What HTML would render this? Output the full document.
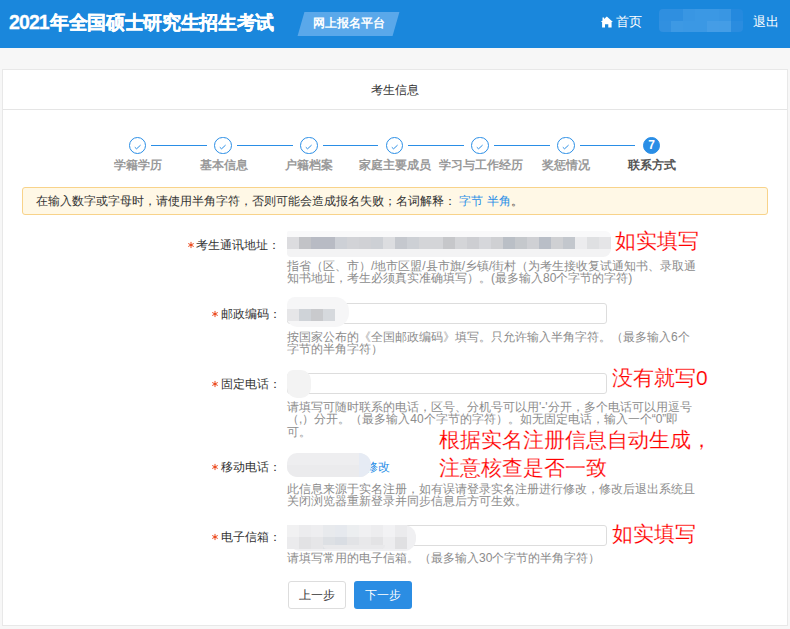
<!DOCTYPE html>
<html><head><meta charset="utf-8">
<style>
*{margin:0;padding:0;box-sizing:border-box}
html,body{width:790px;height:629px;overflow:hidden;background:#f7f7f7;font-family:"Liberation Sans",sans-serif;color:#333}
.a{position:absolute;white-space:nowrap}
#hd{position:absolute;left:0;top:0;width:790px;height:48px;background:#1a87dc}
#title{left:9px;top:11px;font-size:18.67px;line-height:22px;font-weight:bold;color:#fff;-webkit-text-stroke:0.3px #fff}
#plat{left:301px;top:12px;width:95px;height:24px;background:#5aa8ea;transform:skewX(-16deg)}
#platt{left:313px;top:17px;font-size:12px;line-height:12px;font-weight:bold;color:#fff}
#card{position:absolute;left:2px;top:69px;width:786px;height:557px;background:#fff;border:1px solid #e8e8e8}
#cardline{position:absolute;left:3px;top:109px;width:784px;height:1px;background:#e5e5e5}
.lbl{font-size:12px;line-height:12px;color:#333}
.help{font-size:12px;line-height:12.3px;color:#8c8c8c}
.ann{font-size:21px;line-height:21px;color:#ff0000;-webkit-text-stroke:0.18px #fff}
.inp{position:absolute;width:320px;height:21px;border:1px solid #ddd;border-radius:3px;background:#fff}
.star{color:#e8402f;font-size:15px;font-family:"Liberation Mono",monospace;font-weight:bold;position:relative;top:2px}
.circ{position:absolute;width:18px;height:18px;border:1px solid #2a8ee6;border-radius:50%;background:#fff}
.sline{position:absolute;height:1px;background:#2a8ee6;top:145px}
.slbl{font-size:12px;line-height:12px;font-weight:bold;color:#999}
.blur{position:absolute;border-radius:10px}
</style></head><body>
<div id="hd"></div>
<div class="a" id="title"><span style="font-size:19.5px;letter-spacing:-0.9px;margin-right:1.2px">2021</span><span style="letter-spacing:-0.33px">年全国硕士研究生招生考试</span></div>
<div class="a" id="plat"></div>
<div class="a" id="platt">网上报名平台</div>
<svg class="a" style="left:600px;top:16px" width="14" height="12" viewBox="0 0 14 12"><path d="M6.85 0.6 L12.9 5.9 L11.6 5.9 L11.6 11.5 L8.3 11.5 L8.3 8.3 L5.0 8.3 L5.0 11.5 L2.1 11.5 L2.1 5.9 L0.8 5.9 L2.5 4.4 L2.5 1.5 L4.1 1.5 L4.1 3.0 Z" fill="#fff"/></svg>
<div class="a" style="left:616px;top:15px;font-size:13px;line-height:13px;color:#fff">首页</div>
<div class="a" style="left:659px;top:9px;width:84px;height:23px;border-radius:4px;overflow:hidden"><div style="position:absolute;left:0px;top:0;width:12px;height:11.5px;background:#2f8fe0"></div><div style="position:absolute;left:12px;top:0;width:12px;height:11.5px;background:#2f8fe0"></div><div style="position:absolute;left:24px;top:0;width:12px;height:11.5px;background:#3996e3"></div><div style="position:absolute;left:36px;top:0;width:12px;height:11.5px;background:#3b98e4"></div><div style="position:absolute;left:48px;top:0;width:12px;height:11.5px;background:#3b98e4"></div><div style="position:absolute;left:60px;top:0;width:12px;height:11.5px;background:#3996e3"></div><div style="position:absolute;left:72px;top:0;width:12px;height:11.5px;background:#2489de"></div><div style="position:absolute;left:0px;top:11.5px;width:12px;height:11.5px;background:#3190e0"></div><div style="position:absolute;left:12px;top:11.5px;width:12px;height:11.5px;background:#3d99e4"></div><div style="position:absolute;left:24px;top:11.5px;width:12px;height:11.5px;background:#3b98e4"></div><div style="position:absolute;left:36px;top:11.5px;width:12px;height:11.5px;background:#3b98e4"></div><div style="position:absolute;left:48px;top:11.5px;width:12px;height:11.5px;background:#459de6"></div><div style="position:absolute;left:60px;top:11.5px;width:12px;height:11.5px;background:#449de6"></div><div style="position:absolute;left:72px;top:11.5px;width:12px;height:11.5px;background:#2a8cdf"></div></div>
<div class="a" style="left:753px;top:15px;font-size:13px;line-height:13px;color:#fff">退出</div>

<div id="card"></div>
<div id="cardline"></div>
<div class="a lbl" style="left:371px;top:84px">考生信息</div>
<!-- steps -->
<div class="circ" style="left:128.50px;top:136.50px;width:17.6px;height:17.6px"><svg width="16" height="16" style="position:absolute;left:0;top:0"><path d="M4.8 9.3 L6.6 10.8 L10.6 7.1" stroke="#2a8ee6" stroke-width="1" fill="none"/></svg></div>
<div class="a slbl" style="left:77.80px;width:120px;text-align:center;top:159px;color:#999">学籍学历</div>
<div class="circ" style="left:214.23px;top:136.50px;width:17.6px;height:17.6px"><svg width="16" height="16" style="position:absolute;left:0;top:0"><path d="M4.8 9.3 L6.6 10.8 L10.6 7.1" stroke="#2a8ee6" stroke-width="1" fill="none"/></svg></div>
<div class="sline" style="left:151.10px;width:55.73px"></div>
<div class="a slbl" style="left:163.53px;width:120px;text-align:center;top:159px;color:#999">基本信息</div>
<div class="circ" style="left:299.96px;top:136.50px;width:17.6px;height:17.6px"><svg width="16" height="16" style="position:absolute;left:0;top:0"><path d="M4.8 9.3 L6.6 10.8 L10.6 7.1" stroke="#2a8ee6" stroke-width="1" fill="none"/></svg></div>
<div class="sline" style="left:236.83px;width:55.73px"></div>
<div class="a slbl" style="left:249.26px;width:120px;text-align:center;top:159px;color:#999">户籍档案</div>
<div class="circ" style="left:385.69px;top:136.50px;width:17.6px;height:17.6px"><svg width="16" height="16" style="position:absolute;left:0;top:0"><path d="M4.8 9.3 L6.6 10.8 L10.6 7.1" stroke="#2a8ee6" stroke-width="1" fill="none"/></svg></div>
<div class="sline" style="left:322.56px;width:55.73px"></div>
<div class="a slbl" style="left:334.99px;width:120px;text-align:center;top:159px;color:#999">家庭主要成员</div>
<div class="circ" style="left:471.42px;top:136.50px;width:17.6px;height:17.6px"><svg width="16" height="16" style="position:absolute;left:0;top:0"><path d="M4.8 9.3 L6.6 10.8 L10.6 7.1" stroke="#2a8ee6" stroke-width="1" fill="none"/></svg></div>
<div class="sline" style="left:408.29px;width:55.73px"></div>
<div class="a slbl" style="left:420.72px;width:120px;text-align:center;top:159px;color:#999">学习与工作经历</div>
<div class="circ" style="left:557.15px;top:136.50px;width:17.6px;height:17.6px"><svg width="16" height="16" style="position:absolute;left:0;top:0"><path d="M4.8 9.3 L6.6 10.8 L10.6 7.1" stroke="#2a8ee6" stroke-width="1" fill="none"/></svg></div>
<div class="sline" style="left:494.02px;width:55.73px"></div>
<div class="a slbl" style="left:506.45px;width:120px;text-align:center;top:159px;color:#999">奖惩情况</div>
<div class="circ" style="left:642.88px;top:136.50px;width:17.6px;height:17.6px;background:#2a8ee6;color:#fff;font-size:12px;font-weight:bold;line-height:15.6px;text-align:center">7</div>
<div class="sline" style="left:579.75px;width:55.73px"></div>
<div class="a slbl" style="left:592.18px;width:120px;text-align:center;top:159px;color:#555">联系方式</div>
<!-- alert -->
<div class="a" style="left:22px;top:187px;width:746px;height:28px;background:#fff8e6;border:1px solid #f8d38a;border-radius:3px"></div>
<div class="a lbl" style="left:36px;top:195px">在输入数字或字母时，请使用半角字符，否则可能会造成报名失败；名词解释： <span style="color:#2a8ee6">字节 半角</span>。</div>

<!-- row 1 -->
<svg class="a" style="left:186.5px;top:241px" width="8" height="8" viewBox="0 0 8 8"><g stroke="#ec4a1e" stroke-width="1" stroke-linecap="round"><path d="M4 1.3V6.7M1.6 2.7L6.4 5.3M1.6 5.3L6.4 2.7"/></g><circle cx="4" cy="4" r="1.1" fill="#ec4a1e"/></svg>
<div class="a lbl" style="left:196px;top:239px">考生通讯地址：</div>
<div class="inp" style="left:287px;top:232px"></div>
<div class="a" style="left:287px;top:231px;width:324px;height:6px;background:#f9f9fa;border-radius:2px 8px 0 0"></div><div class="a" style="left:287px;top:249px;width:324px;height:8px;background:#f3f3f4;border-radius:0 0 8px 4px"></div>
<div class="a" style="left:287px;top:237px;width:12px;height:12px;background:#dcdcdf"></div><div class="a" style="left:299px;top:237px;width:12px;height:12px;background:#c2c3c7"></div><div class="a" style="left:311px;top:237px;width:12px;height:12px;background:#b8bbc4"></div><div class="a" style="left:323px;top:237px;width:12px;height:12px;background:#b8bbc4"></div><div class="a" style="left:335px;top:237px;width:12px;height:12px;background:#cdd0d6"></div><div class="a" style="left:347px;top:237px;width:12px;height:12px;background:#d2d3d7"></div><div class="a" style="left:359px;top:237px;width:12px;height:12px;background:#d0d1d5"></div><div class="a" style="left:371px;top:237px;width:12px;height:12px;background:#cdd0d5"></div><div class="a" style="left:383px;top:237px;width:12px;height:12px;background:#dcdde0"></div><div class="a" style="left:395px;top:237px;width:12px;height:12px;background:#c5c8ce"></div><div class="a" style="left:407px;top:237px;width:12px;height:12px;background:#cdd0d5"></div><div class="a" style="left:419px;top:237px;width:12px;height:12px;background:#d4d5d8"></div><div class="a" style="left:431px;top:237px;width:12px;height:12px;background:#d4d5d8"></div><div class="a" style="left:443px;top:237px;width:12px;height:12px;background:#c6c7ca"></div><div class="a" style="left:455px;top:237px;width:12px;height:12px;background:#d4d5d8"></div><div class="a" style="left:467px;top:237px;width:12px;height:12px;background:#cdced2"></div><div class="a" style="left:479px;top:237px;width:12px;height:12px;background:#d6d7db"></div><div class="a" style="left:491px;top:237px;width:12px;height:12px;background:#cfd0d3"></div><div class="a" style="left:503px;top:237px;width:12px;height:12px;background:#babfc6"></div><div class="a" style="left:515px;top:237px;width:12px;height:12px;background:#c5c8cc"></div><div class="a" style="left:527px;top:237px;width:12px;height:12px;background:#cfd0d4"></div><div class="a" style="left:539px;top:237px;width:12px;height:12px;background:#b9bec7"></div><div class="a" style="left:551px;top:237px;width:12px;height:12px;background:#cfd0d3"></div><div class="a" style="left:563px;top:237px;width:12px;height:12px;background:#c3c7cd"></div><div class="a" style="left:575px;top:237px;width:12px;height:12px;background:#ececee"></div><div class="a" style="left:587px;top:237px;width:12px;height:12px;background:#dfe0e2"></div><div class="a" style="left:599px;top:237px;width:12px;height:12px;background:#e5e5e7"></div>
<div class="a help" style="left:287px;top:260px">指省（区、市）/地市区盟/县市旗/乡镇/街村（为考生接收复试通知书、录取通<br>知书地址，考生必须真实准确填写）。(最多输入80个字节的字符)</div>
<div class="a ann" style="left:615px;top:230px">如实填写</div>
<!-- row 2 -->
<svg class="a" style="left:210.5px;top:310px" width="8" height="8" viewBox="0 0 8 8"><g stroke="#ec4a1e" stroke-width="1" stroke-linecap="round"><path d="M4 1.3V6.7M1.6 2.7L6.4 5.3M1.6 5.3L6.4 2.7"/></g><circle cx="4" cy="4" r="1.1" fill="#ec4a1e"/></svg>
<div class="a lbl" style="left:220.5px;top:308px">邮政编码：</div>
<div class="inp" style="left:287px;top:303px"></div>
<div class="a" style="left:287px;top:297px;width:62px;height:30px;background:#f6f6f7;border-radius:8px 14px 14px 10px"></div>
<div class="a" style="left:287px;top:309px;width:12px;height:12px;background:#e6e6e8"></div><div class="a" style="left:299px;top:309px;width:12px;height:12px;background:#cfd3d8"></div><div class="a" style="left:311px;top:309px;width:12px;height:12px;background:#c9cacd"></div><div class="a" style="left:323px;top:309px;width:12px;height:12px;background:#d6d9dd"></div>
<div class="a help" style="left:287px;top:331px">按国家公布的《全国邮政编码》填写。只允许输入半角字符。（最多输入6个<br>字节的半角字符）</div>
<!-- row 3 -->
<svg class="a" style="left:210.5px;top:380px" width="8" height="8" viewBox="0 0 8 8"><g stroke="#ec4a1e" stroke-width="1" stroke-linecap="round"><path d="M4 1.3V6.7M1.6 2.7L6.4 5.3M1.6 5.3L6.4 2.7"/></g><circle cx="4" cy="4" r="1.1" fill="#ec4a1e"/></svg>
<div class="a lbl" style="left:220.5px;top:378px">固定电话：</div>
<div class="inp" style="left:287px;top:373px"></div>
<div class="a" style="left:287px;top:370px;width:24px;height:28px;background:#f3f3f3;border-radius:6px 10px 10px 10px"></div>
<div class="a help" style="left:287px;top:401px">请填写可随时联系的电话，区号、分机号可以用'-'分开，多个电话可以用逗号<br>（,）分开。（最多输入40个字节的字符）。如无固定电话，输入一个“0”即<br>可。</div>
<div class="a ann" style="left:612px;top:367px">没有就写0</div>
<!-- row 4 -->
<svg class="a" style="left:210.5px;top:463px" width="8" height="8" viewBox="0 0 8 8"><g stroke="#ec4a1e" stroke-width="1" stroke-linecap="round"><path d="M4 1.3V6.7M1.6 2.7L6.4 5.3M1.6 5.3L6.4 2.7"/></g><circle cx="4" cy="4" r="1.1" fill="#ec4a1e"/></svg>
<div class="a lbl" style="left:220.5px;top:461px">移动电话：</div>
<div class="a lbl" style="left:366px;top:461px;color:#2a8ee6">修改</div>
<div class="a" style="left:287px;top:453px;width:84px;height:24px;background:#eeeef0;border-radius:10px 12px 12px 10px;overflow:hidden"><div style="position:absolute;left:0;top:12px;width:84px;height:12px;background:#ebebed"></div><div style="position:absolute;left:72px;top:0;width:12px;height:24px;background:#e6ebf4"></div></div>
<div class="a help" style="left:287px;top:483px">此信息来源于实名注册，如有误请登录实名注册进行修改，修改后退出系统且<br>关闭浏览器重新登录并同步信息后方可生效。</div>
<div class="a ann" style="left:439px;top:426px;line-height:27.5px">根据实名注册信息自动生成，<br>注意核查是否一致</div>
<!-- row 5 -->
<svg class="a" style="left:210.5px;top:533px" width="8" height="8" viewBox="0 0 8 8"><g stroke="#ec4a1e" stroke-width="1" stroke-linecap="round"><path d="M4 1.3V6.7M1.6 2.7L6.4 5.3M1.6 5.3L6.4 2.7"/></g><circle cx="4" cy="4" r="1.1" fill="#ec4a1e"/></svg>
<div class="a lbl" style="left:220.5px;top:531px">电子信箱：</div>
<div class="inp" style="left:287px;top:525px"></div>
<div class="a" style="left:287px;top:525px;width:129px;height:26px;background:#f0f0f2;border-radius:3px 12px 12px 14px"></div>
<div class="a" style="left:287px;top:525px;width:12px;height:12px;background:#f1f1f2"></div><div class="a" style="left:299px;top:525px;width:12px;height:12px;background:#ececee"></div><div class="a" style="left:311px;top:525px;width:12px;height:12px;background:#eeeef0"></div><div class="a" style="left:323px;top:525px;width:12px;height:12px;background:#e8eaed"></div><div class="a" style="left:335px;top:525px;width:12px;height:12px;background:#e6e9ee"></div><div class="a" style="left:347px;top:525px;width:12px;height:12px;background:#eceef0"></div><div class="a" style="left:359px;top:525px;width:12px;height:12px;background:#f0f0f2"></div><div class="a" style="left:371px;top:525px;width:12px;height:12px;background:#ededef"></div><div class="a" style="left:383px;top:525px;width:12px;height:12px;background:#f2f2f4"></div><div class="a" style="left:395px;top:525px;width:12px;height:12px;background:#ebebed"></div>
<div class="a" style="left:287px;top:537px;width:12px;height:12px;background:#ebebed"></div><div class="a" style="left:299px;top:537px;width:12px;height:12px;background:#e2e2e4"></div><div class="a" style="left:311px;top:537px;width:12px;height:12px;background:#e6e6e8"></div><div class="a" style="left:323px;top:537px;width:12px;height:12px;background:#dde0e4"></div><div class="a" style="left:335px;top:537px;width:12px;height:12px;background:#d9dde3"></div><div class="a" style="left:347px;top:537px;width:12px;height:12px;background:#e2e3e6"></div><div class="a" style="left:359px;top:537px;width:12px;height:12px;background:#e8e8ea"></div><div class="a" style="left:371px;top:537px;width:12px;height:12px;background:#e3e3e5"></div><div class="a" style="left:383px;top:537px;width:12px;height:12px;background:#ededef"></div><div class="a" style="left:395px;top:537px;width:12px;height:12px;background:#e0e0e2"></div>
<div class="a" style="left:323px;top:545px;width:62px;height:4px;background:#e9e9eb;border-radius:0 0 14px 14px"></div><div class="a help" style="left:287px;top:552px">请填写常用的电子信箱。（最多输入30个字节的半角字符）</div>
<div class="a ann" style="left:612px;top:523px">如实填写</div>

<!-- buttons -->
<div class="a" style="left:288px;top:581px;width:58px;height:28px;border:1px solid #ddd;border-radius:3px;background:#fff;font-size:12px;line-height:26px;text-align:center;color:#333">上一步</div>
<div class="a" style="left:354px;top:581px;width:58px;height:28px;border-radius:3px;background:#2b8de3;font-size:12px;line-height:28px;text-align:center;color:#fff">下一步</div>
</body></html>
